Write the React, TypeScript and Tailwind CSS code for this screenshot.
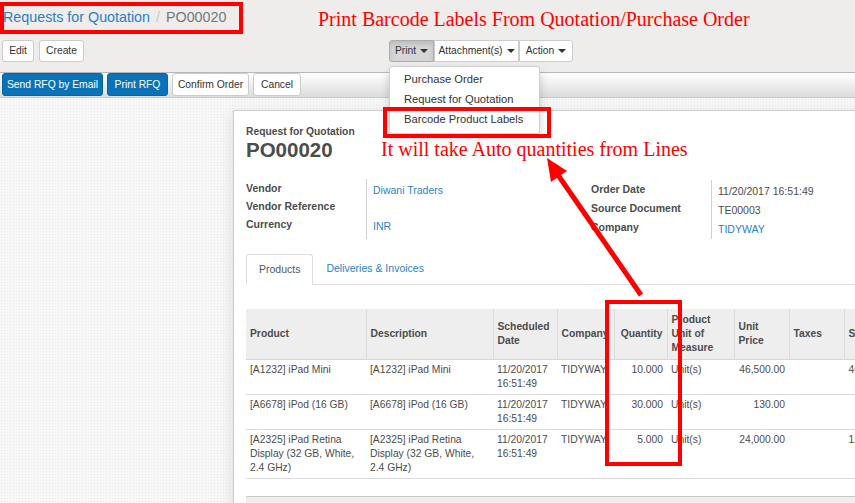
import React from 'react';

const Caret = () => (
  <span className="inline-block w-0 h-0 ml-[4px] border-t-[4px] border-t-[#333] border-x-[4px] border-x-transparent" />
);

const ToolButton = ({ label, width, caret = false, active = false, rounded = '' }: { label: string; width: string; caret?: boolean; active?: boolean; rounded?: string }) => {
  return (
    <button
      className={`h-[22px] ${width} flex items-center justify-center border text-[10.3px] text-[#333] ${rounded}
        ${active ? 'bg-[#d6d6d6] border-[#adadad] shadow-[inset_0_3px_5px_rgba(0,0,0,0.13)]' : 'bg-white border-[#ccc]'}`}
    >
      {label}
      {caret && <Caret />}
    </button>
  );
};

const StatusButton = ({ label, width, primary = false }: { label: string; width: string; primary?: boolean }) => {
  return (
    <button
      className={`h-[23px] ${width} rounded-[3px] border text-[10.3px] flex items-center justify-center
        ${primary ? 'bg-[#0a73b7] border-[#08659f] text-white' : 'bg-white border-[#ccc] text-[#333]'}`}
    >
      {label}
    </button>
  );
};

const lines = [
  {
    product: '[A1232] iPad Mini',
    qty: '10.000',
    price: '46,500.00',
    subtotal: '465,000.00',
  },
  {
    product: '[A6678] iPod (16 GB)',
    qty: '30.000',
    price: '130.00',
    subtotal: '3,900.00',
  },
  {
    product: '[A2325] iPad Retina Display (32 GB, White, 2.4 GHz)',
    qty: '5.000',
    price: '24,000.00',
    subtotal: '120,000.00',
  },
];

export default function App() {
  return (
    <div className="relative w-[855px] h-[503px] overflow-hidden bg-[#f7f7f7] text-[#4c4c4c] font-['Liberation_Sans',Arial,sans-serif]">

      {/* control panel */}
      <div className="h-[73px] bg-[#eeedeb] border-b border-[#b6b6be] pt-[7px]">
        <div className="h-[20px] flex items-center pl-[3px] text-[14.3px] leading-[20px]">
          <span className="text-[#2a7fc4]">Requests for Quotation</span>
          <span className="text-[#c8c8c8] px-[6px]">/</span>
          <span className="text-[#777]">PO00020</span>
        </div>
        <div className="flex mt-[13px]">
          <div className="flex gap-[5px] pl-[2px]">
            <ToolButton label="Edit" width="w-[32px]" rounded="rounded-[3px]" />
            <ToolButton label="Create" width="w-[45px]" rounded="rounded-[3px]" />
          </div>
          <div className="flex ml-[305px]">
            <ToolButton label="Print" width="w-[45px]" caret active rounded="rounded-l-[3px]" />
            <ToolButton label="Attachment(s)" width="w-[85px]" caret />
            <ToolButton label="Action" width="w-[54px]" caret rounded="rounded-r-[3px]" />
          </div>
        </div>
      </div>

      {/* status bar */}
      <div className="h-[25px] bg-gradient-to-b from-[#ffffff] to-[#dcdcdc] border-b border-[#c9c9c9] flex items-start gap-[4px] pl-[2px]">
        <StatusButton label="Send RFQ by Email" width="w-[101px]" primary />
        <StatusButton label="Print RFQ" width="w-[61px]" primary />
        <StatusButton label="Confirm Order" width="w-[77px]" />
        <StatusButton label="Cancel" width="w-[48px]" />
      </div>

      {/* sheet background */}
      <div className="pt-[12px] pl-[233px] bg-[radial-gradient(#e9e9e9_1px,transparent_1px)] bg-[size:3px_3px] h-full">
        <div className="w-[716px] bg-white border border-[#cfcfcf] shadow-[0_4px_12px_rgba(0,0,0,0.12)] px-[12px] pt-[14px] pb-[40px]">
          <div className="text-[10.3px] leading-[13px] font-bold">Request for Quotation</div>
          <div className="text-[20.5px] leading-[24px] font-bold">PO00020</div>

          {/* groups */}
          <div className="flex mt-[17px] text-[10.5px]">
            <div className="w-[346px] flex">
              <div className="w-[120px] font-bold">
                <div className="h-[19px] leading-[19px]">Vendor</div>
                <div className="h-[17px] leading-[17px]">Vendor Reference</div>
                <div className="h-[19px] leading-[19px]">Currency</div>
              </div>
              <div className="border-l border-[#d0d0d0] pl-[6px] pt-[2px]">
                <div className="h-[19px] leading-[19px] text-[#2a7fc4]">Diwani Traders</div>
                <div className="h-[17px]" />
                <div className="h-[19px] leading-[19px] text-[#2a7fc4]">INR</div>
              </div>
            </div>
            <div className="w-[346px] flex mt-px">
              <div className="w-[120px] font-bold">
                <div className="h-[19px] leading-[19px]">Order Date</div>
                <div className="h-[19px] leading-[19px]">Source Document</div>
                <div className="h-[19px] leading-[19px]">Company</div>
              </div>
              <div className="border-l border-[#d0d0d0] pl-[6px] pt-[2px]">
                <div className="h-[19px] leading-[19px]">11/20/2017 16:51:49</div>
                <div className="h-[19px] leading-[19px]">TE00003</div>
                <div className="h-[19px] leading-[19px] text-[#2a7fc4]">TIDYWAY</div>
              </div>
            </div>
          </div>

          {/* tabs */}
          <div className="flex mt-[15px] border-b border-[#ddd] text-[10.5px]">
            <div className="h-[31px] -mb-px px-[12px] flex items-center bg-white border border-[#ddd] border-b-white rounded-t-[3px] text-[#555]">
              Products
            </div>
            <div className="h-[30px] px-[13px] flex items-center text-[#2a7fc4]">Deliveries &amp; Invoices</div>
          </div>

          {/* order lines */}
          <table className="mt-[24px] table-fixed border-collapse text-[10.3px] leading-[14px] w-[658px]">
            <colgroup>
              <col className="w-[120px]" />
              <col className="w-[127px]" />
              <col className="w-[64px]" />
              <col className="w-[57px]" />
              <col className="w-[53px]" />
              <col className="w-[67px]" />
              <col className="w-[55px]" />
              <col className="w-[55px]" />
              <col className="w-[60px]" />
            </colgroup>
            <thead>
              <tr className="h-[50px] bg-[#eeeeee] border-b border-[#d6d6d6] font-bold text-left">
                <th className="px-[4px] align-middle">Product</th>
                <th className="px-[4px] align-middle border-l border-[#dcdcdc]">Description</th>
                <th className="px-[4px] align-middle border-l border-[#dcdcdc]">Scheduled Date</th>
                <th className="px-[4px] align-middle border-l border-[#dcdcdc] whitespace-nowrap overflow-hidden">Company</th>
                <th className="px-[4px] align-middle border-l border-[#dcdcdc] text-right">Quantity</th>
                <th className="px-[4px] align-middle border-l border-[#dcdcdc]">Product Unit of Measure</th>
                <th className="px-[4px] align-middle border-l border-[#dcdcdc]">Unit Price</th>
                <th className="px-[4px] align-middle border-l border-[#dcdcdc]">Taxes</th>
                <th className="px-[4px] align-middle border-l border-[#dcdcdc]">Subtotal</th>
              </tr>
            </thead>
            <tbody>
              {lines.map((l) => (
                <tr key={l.product} className="border-b border-[#dcdcdc] align-top">
                  <td className="px-[4px] pt-[3px] pb-[3px]">{l.product}</td>
                  <td className="px-[4px] pt-[3px] pb-[3px]">{l.product}</td>
                  <td className="px-[4px] pt-[3px] pb-[3px]">11/20/2017 16:51:49</td>
                  <td className="px-[4px] pt-[3px] pb-[3px] whitespace-nowrap overflow-hidden">TIDYWAY</td>
                  <td className="px-[4px] pt-[3px] pb-[3px] text-right">{l.qty}</td>
                  <td className="px-[4px] pt-[3px] pb-[3px]">Unit(s)</td>
                  <td className="px-[4px] pt-[3px] pb-[3px] text-right">{l.price}</td>
                  <td className="px-[4px] pt-[3px] pb-[3px]"></td>
                  <td className="px-[4px] pt-[3px] pb-[3px] text-right whitespace-nowrap">{l.subtotal}</td>
                </tr>
              ))}
              <tr className="h-[18px]">
                <td colSpan={9}></td>
              </tr>
            </tbody>
            <tfoot>
              <tr className="h-[20px] bg-[#eeeeee] border-t border-[#c8c8c8]">
                <td colSpan={9}></td>
              </tr>
            </tfoot>
          </table>
        </div>
      </div>

      {/* print dropdown */}
      <div className="absolute left-[389px] top-[66px] w-[151px] bg-white border border-[#d0d0d0] rounded-[3px] shadow-[0_4px_10px_rgba(0,0,0,0.18)] pt-[2px] pb-[4px] text-[11.2px] text-[#333]">
        <div className="h-[20px] leading-[20px] pl-[14px]">Purchase Order</div>
        <div className="h-[20px] leading-[20px] pl-[14px]">Request for Quotation</div>
        <div className="h-[20px] leading-[20px] pl-[14px]">Barcode Product Labels</div>
      </div>

      {/* annotations */}
      <div className="absolute left-0 top-[2px] w-[243px] h-[32px] border-[4px] border-[#ff0000]" />
      <div className="absolute left-[318px] top-[7px] leading-[24px] text-[20px] text-[#ff0000] font-['Liberation_Serif','Times_New_Roman',serif] whitespace-nowrap">
        Print Barcode Labels From Quotation/Purchase Order
      </div>
      <div className="absolute left-[383px] top-[107px] w-[168px] h-[31px] border-[4px] border-[#ff0000]" />
      <div className="absolute left-[381px] top-[137px] leading-[24px] text-[20px] text-[#ff0000] font-['Liberation_Serif','Times_New_Roman',serif] whitespace-nowrap">
        It will take Auto quantities from Lines
      </div>
      <div className="absolute left-[605px] top-[300px] w-[77px] h-[166px] border-[4px] border-[#ff0000]" />
      <svg className="absolute left-0 top-0 pointer-events-none" width="855" height="503">
        <line x1="641" y1="295" x2="558" y2="175" stroke="#ff0000" strokeWidth="5" />
        <polygon points="547,158 567,171 551,182" fill="#ff0000" />
      </svg>
    </div>
  );
}
